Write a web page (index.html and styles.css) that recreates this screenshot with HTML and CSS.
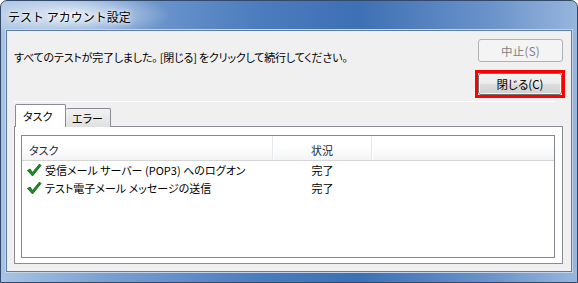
FILE: index.html
```html
<!DOCTYPE html>
<html lang="ja">
<head>
<meta charset="utf-8">
<title>テスト アカウント設定</title>
<link rel="stylesheet" href="styles.css">
</head>
<body>
<div class="window">
  <div class="titlebar"><span class="title">テスト アカウント設定</span></div>
  <div class="client">
    <div class="top">
      <p class="msg">すべてのテストが完了しました。 [閉じる] をクリックして続行してください。</p>
      <div class="btns">
        <button class="btn btn-disabled" disabled>中止(S)</button>
        <div class="highlight"><button class="btn">閉じる(C)</button></div>
      </div>
    </div>
    <div class="sep"></div>
    <div class="tabs">
      <div class="tab tab-active">タスク</div>
      <div class="tab">エラー</div>
    </div>
    <div class="panel">
      <div class="list">
        <div class="lhead">
          <div class="col c1">タスク</div>
          <div class="col c2">状況</div>
          <div class="col c3"></div>
        </div>
        <div class="row">
          <div class="cell c1"><svg class="check" viewBox="0 0 16 14" width="16" height="14"><path d="M1.5 7.5 L4 6 L6.5 9.5 L13.5 1 L15 2.5 L6.5 13 Z" fill="#1f8f1f" stroke="#0e5a0e" stroke-width="0.8" stroke-linejoin="round"/></svg>受信メール サーバー (POP3) へのログオン</div>
          <div class="cell c2">完了</div>
        </div>
        <div class="row">
          <div class="cell c1"><svg class="check" viewBox="0 0 16 14" width="16" height="14"><path d="M1.5 7.5 L4 6 L6.5 9.5 L13.5 1 L15 2.5 L6.5 13 Z" fill="#1f8f1f" stroke="#0e5a0e" stroke-width="0.8" stroke-linejoin="round"/></svg>テスト電子メール メッセージの送信</div>
          <div class="cell c2">完了</div>
        </div>
      </div>
    </div>
  </div>
</div>
</body>
</html>
```
FILE: styles.css
```css
* { box-sizing: border-box; }
html, body { margin: 0; padding: 0; background: #fff; }
body {
  font-family: "Noto Sans CJK JP", "Noto Sans", sans-serif;
  font-size: 11px;
  color: #000;
  font-feature-settings: "palt";
}
.window {
  width: 578px;
  height: 283px;
  border: 1px solid #34496a;
  border-radius: 7px 7px 0 0;
  background:
    radial-gradient(ellipse 100px 24px at 70px 14px, rgba(255,255,255,0.8), rgba(255,255,255,0) 100%),
    linear-gradient(90deg, #a9c3e3 0%, #7aa0d2 18%, #4b7cbd 45%, #3d70b4 62%, #6b93c9 85%, #97b5dd 100%);
  display: flex;
  flex-direction: column;
  padding: 0 5px 10px 5px;
  overflow: hidden;
}
.titlebar {
  height: 29px;
  display: flex;
  align-items: center;
  padding-left: 2px;
  padding-top: 1px;
}
.title {
  font-feature-settings: normal;
  font-size: 12px;
  color: #000;
  text-shadow: 0 0 6px #fff, 0 0 3px #fff;
}
.client {
  flex: 1;
  background: #f0f0f0;
  border: 1px solid #5e7ea9;
  box-shadow: 0 0 0 1px #c6d6ea;
  padding: 8px 6px 7px 7px;
  display: flex;
  flex-direction: column;
}
.top {
  display: flex;
  justify-content: space-between;
}
.msg {
  margin: 10px 0 0 0;
  line-height: 16px;
  letter-spacing: -0.2px;
  white-space: pre;
}
.btns {
  width: 90px;
  display: flex;
  flex-direction: column;
  gap: 8px;
}
.btn {
  font: inherit;
  font-size: 11.5px;
  height: 22px;
  border: 1px solid #707070;
  border-radius: 3px;
  background: linear-gradient(#f2f2f2 0%, #ebebeb 48%, #dddddd 52%, #cfcfcf 100%);
  color: #000;
  padding: 0;
  box-shadow: inset 0 0 0 1px rgba(255,255,255,0.7);
}
.btn-disabled {
  margin: 0 2px 0 3px;
  height: 23px;
  border-color: #adb2b5;
  background: #f4f4f4;
  color: #838383;
  box-shadow: none;
  letter-spacing: 0.3px;
}
.highlight {
  border: 3px solid #ff0000;
  height: 28px;
  display: flex;
}
.highlight .btn { flex: 1; }
.sep {
  margin: 3px 10px 3px 0;
  height: 1px;
  background: #a0a0a0;
  border-bottom: 1px solid #fff;
}
.tabs {
  display: flex;
  align-items: flex-end;
  height: 22px;
  position: relative;
  z-index: 1;
  margin-bottom: -1px;
  padding-left: 1px;
}
.tab {
  height: 19px;
  padding: 0 7px 0 6px;
  border: 1px solid #898c95;
  border-bottom: none;
  border-left: none;
  border-radius: 2px 2px 0 0;
  background: linear-gradient(#f2f2f2, #e0e0e0);
  line-height: 18px;
  white-space: nowrap;
}
.tab-active {
  height: 23px;
  width: 51px;
  border-left: 1px solid #898c95;
  border-right: 1px solid #898c95;
  background: #fff;
  padding: 3px 0 0 7px;
  line-height: 16px;
}
.panel {
  flex: 1;
  background: #fff;
  border: 1px solid #898c95;
  margin-right: 2px;
  padding: 8px 7px 5px 6px;
  display: flex;
}
.list {
  flex: 1;
  border: 1px solid #828790;
  background: #fff;
}
.lhead {
  display: flex;
  height: 25px;
  background: linear-gradient(#ffffff 0%, #ffffff 40%, #f3f4f6 100%);
  border-bottom: 1px solid #d5d5d5;
}
.lhead .col {
  line-height: 24px;
  padding-top: 2px;
  color: #1e2a3c;
  border-right: 1px solid #e3e8ee;
  box-shadow: 1px 0 0 #fff;
}
.c1 { width: 251px; padding-left: 7px; }
.c2 { width: 99px; justify-content: center; text-align: center; }
.lhead .c3 { flex: 1; border-right: none; box-shadow: none; }
.row {
  display: flex;
  height: 18px;
  line-height: 18px;
}
.cell { white-space: nowrap; display: flex; align-items: center; }
.row .c1 { padding-left: 4px; overflow: visible; }
.check { margin-right: 3px; flex: none; }
```
